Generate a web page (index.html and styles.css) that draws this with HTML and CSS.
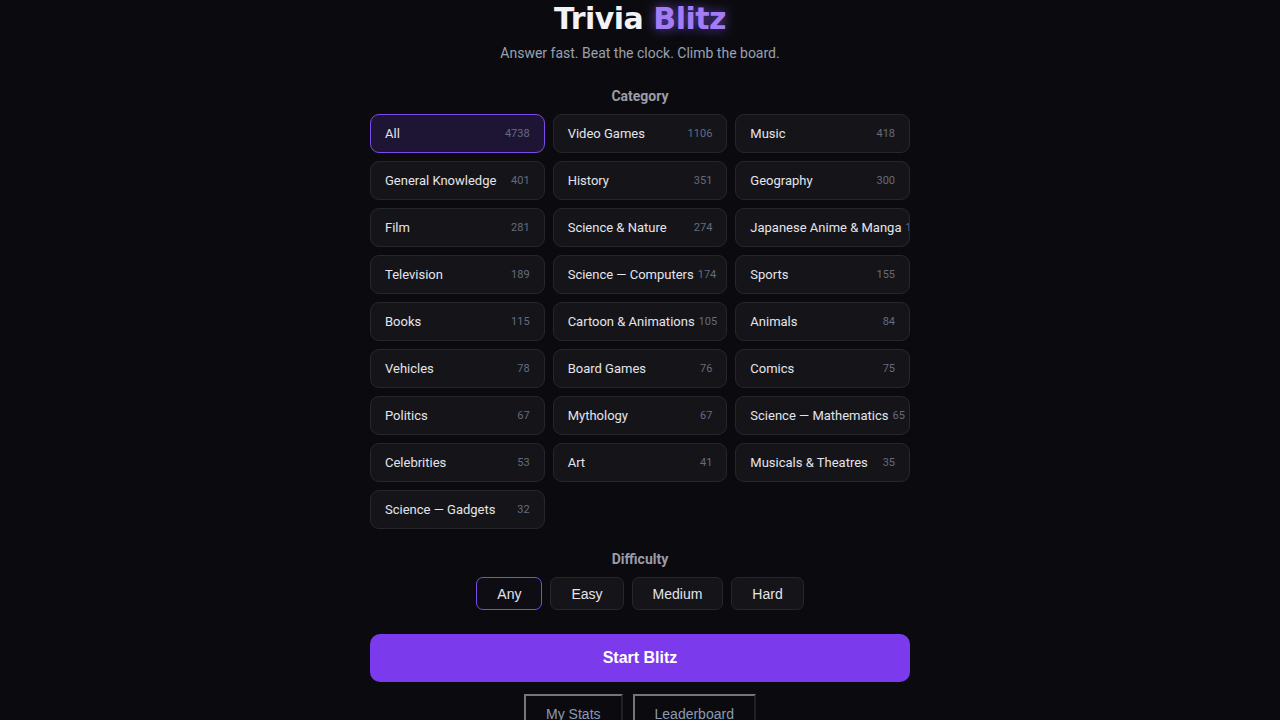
FILE: index.html
```html
<!DOCTYPE html>
<html lang="en">
<head>
    <meta charset="UTF-8">
    <meta name="viewport" content="width=device-width, initial-scale=1.0">
    <title>Trivia Blitz</title>
    <link rel="stylesheet" href="styles.css">
</head>
<body>
    <div class="app">
        <header class="hero">
            <h1 class="logo">Trivia <span class="accent">Blitz</span></h1>
            <p class="tagline">Answer fast. Beat the clock. Climb the board.</p>
        </header>

        <section class="section">
            <h2 class="label">Category</h2>
            <div class="cat-grid">
                <button class="cat active"><span class="name">All</span><span class="count">4738</span></button>
                <button class="cat"><span class="name">Video Games</span><span class="count">1106</span></button>
                <button class="cat"><span class="name">Music</span><span class="count">418</span></button>
                <button class="cat"><span class="name">General Knowledge</span><span class="count">401</span></button>
                <button class="cat"><span class="name">History</span><span class="count">351</span></button>
                <button class="cat"><span class="name">Geography</span><span class="count">300</span></button>
                <button class="cat"><span class="name">Film</span><span class="count">281</span></button>
                <button class="cat"><span class="name">Science &amp; Nature</span><span class="count">274</span></button>
                <button class="cat"><span class="name">Japanese Anime &amp; Manga</span><span class="count">195</span></button>
                <button class="cat"><span class="name">Television</span><span class="count">189</span></button>
                <button class="cat"><span class="name">Science — Computers</span><span class="count">174</span></button>
                <button class="cat"><span class="name">Sports</span><span class="count">155</span></button>
                <button class="cat"><span class="name">Books</span><span class="count">115</span></button>
                <button class="cat"><span class="name">Cartoon &amp; Animations</span><span class="count">105</span></button>
                <button class="cat"><span class="name">Animals</span><span class="count">84</span></button>
                <button class="cat"><span class="name">Vehicles</span><span class="count">78</span></button>
                <button class="cat"><span class="name">Board Games</span><span class="count">76</span></button>
                <button class="cat"><span class="name">Comics</span><span class="count">75</span></button>
                <button class="cat"><span class="name">Politics</span><span class="count">67</span></button>
                <button class="cat"><span class="name">Mythology</span><span class="count">67</span></button>
                <button class="cat"><span class="name">Science — Mathematics</span><span class="count">65</span></button>
                <button class="cat"><span class="name">Celebrities</span><span class="count">53</span></button>
                <button class="cat"><span class="name">Art</span><span class="count">41</span></button>
                <button class="cat"><span class="name">Musicals &amp; Theatres</span><span class="count">35</span></button>
                <button class="cat"><span class="name">Science — Gadgets</span><span class="count">32</span></button>
            </div>
        </section>

        <section class="section diff-section">
            <h2 class="label">Difficulty</h2>
            <div class="diff-row">
                <button class="diff active">Any</button>
                <button class="diff">Easy</button>
                <button class="diff">Medium</button>
                <button class="diff">Hard</button>
            </div>
        </section>

        <button class="start">Start Blitz</button>

        <div class="links">
            <button class="link">My Stats</button>
            <button class="link">Leaderboard</button>
        </div>
    </div>
</body>
</html>
```

FILE: styles.css
```css
body { margin: 0; background: #0b0b0f; color: #e6e6ee; font-family: Roboto, sans-serif; }
.app { width: 540px; margin: 0 auto; padding-top: 1px; }
.hero { text-align: center; }
.logo { margin: 0; font-family: "DejaVu Sans", sans-serif; font-weight: 800; font-size: 30px; line-height: 36px; color: #f2f2f7; letter-spacing: -0.5px; }
.accent { color: #a47cf5; text-shadow: 0 0 12px rgba(139, 92, 246, 0.7); }
.tagline { margin: 8px 0 0; font-size: 14px; color: #9aa0b0; }
.section { margin-top: 27px; }
.diff-section { margin-top: 22px; }
.label { margin: 0 0 10px; font-size: 14px; font-weight: 700; color: #9a9ca8; text-align: center; }
.cat-grid { display: grid; grid-template-columns: repeat(3, 1fr); gap: 8px; }
.cat { display: flex; align-items: center; justify-content: space-between; height: 39px; padding: 0 14px; background: #151519; border: 1px solid #26262e; border-radius: 9px; color: #e4e4ec; font-family: Roboto, sans-serif; font-size: 13px; text-align: left; white-space: nowrap; overflow: hidden; }
.cat .name, .cat .count { flex-shrink: 0; }
.cat .count { font-size: 11px; color: #646b7e; margin-left: 4px; }
.cat.active { background: #1e1535; border-color: #7c4ae8; }
.diff-row { display: flex; justify-content: center; gap: 8px; }
.diff { height: 33px; padding: 0 20px; background: #151519; border: 1px solid #26262e; border-radius: 7px; color: #e4e4ec; font-family: "Liberation Sans", sans-serif; font-size: 14px; }
.diff.active { border-color: #7c4ae8; background: #0e0d14; }
.start { display: block; width: 100%; height: 48px; margin-top: 24px; background: #7c3aed; border: none; border-radius: 10px; color: #fff; font-family: "Liberation Sans", sans-serif; font-size: 16px; font-weight: 700; }
.links { display: flex; justify-content: center; gap: 10px; margin-top: 12px; }
.link { padding: 10px 20px; background: transparent; border: 2px outset #767676; color: #8a9ab2; font-family: "Liberation Sans", sans-serif; font-size: 14px; }
```
